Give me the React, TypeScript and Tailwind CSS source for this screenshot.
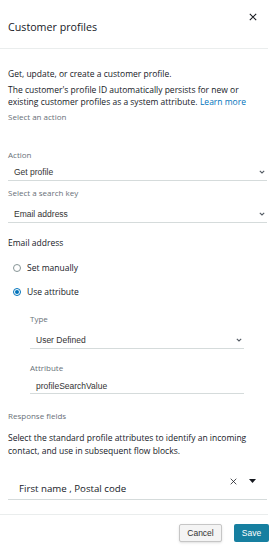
import React from 'react';

const Chevron: React.FC = () => (
  <svg width="6" height="4" viewBox="0 0 6 4" className="shrink-0">
    <path d="M0.8 0.8 L3 3 L5.2 0.8" fill="none" stroke="#545b64" strokeWidth="1.1" />
  </svg>
);

const Cross: React.FC<{ size: number; stroke?: number }> = ({ size, stroke = 1 }) => (
  <svg width={size} height={size} viewBox="0 0 10 10" className="shrink-0">
    <path d="M1 1 L9 9 M9 1 L1 9" fill="none" stroke="#16191f" strokeWidth={stroke} />
  </svg>
);

const Select: React.FC<{ value: string; className?: string }> = ({ value, className = '' }) => (
  <div className={`flex items-center justify-between h-[17px] border-b border-[#d5dbdb] pl-[6px] pr-[2px] ${className}`}>
    <span className="font-['Liberation_Sans',Arial,sans-serif] text-[8.5px] leading-[12px] text-[#333]">{value}</span>
    <Chevron />
  </div>
);

const Label: React.FC<{ children: React.ReactNode; className?: string }> = ({ children, className = '' }) => (
  <div className={`text-[8px] leading-[12px] text-[#687078] ${className}`}>{children}</div>
);

export default function App() {
  return (
    <div className="w-[280px] h-[555px] bg-white overflow-hidden font-['Open_Sans',sans-serif] text-[#16191f]">
      <div className="w-[268px]">
        <div className="flex justify-between h-[49px] border-b border-[#eaeded]">
          <div className="mt-[20px] ml-[8px] text-[10.7px] leading-[14px]">Customer profiles</div>
          <div className="mt-[13px] mr-[11px]">
            <Cross size={8} stroke={1.3} />
          </div>
        </div>

        <div className="pl-[8px] pr-[1px]">
          <div className="mt-[19px] text-[8.5px] leading-[12px]">Get, update, or create a customer profile.</div>
          <div className="mt-[4px] text-[8.5px] leading-[12px]">
            <div>The customer's profile ID automatically persists for new or</div>
            <div className="flex gap-[2.5px]">
              <span>existing customer profiles as a system attribute.</span>
              <span className="text-[#0073bb]">Learn more</span>
            </div>
          </div>
          <Label className="mt-[3px]">Select an action</Label>

          <Label className="mt-[26px]">Action</Label>
          <Select value="Get profile" className="mt-[3px]" />

          <Label className="mt-[6px]">Select a search key</Label>
          <Select value="Email address" className="mt-[7px]" />

          <div className="mt-[14px] text-[8.5px] leading-[12px]">Email address</div>

          <div className="mt-[13px] flex items-center gap-[6px] pl-[5px]">
            <span className="w-[8px] h-[8px] rounded-full border border-[#879596] bg-white" />
            <span className="text-[8.5px] leading-[12px]">Set manually</span>
          </div>
          <div className="mt-[12px] flex items-center gap-[6px] pl-[5px]">
            <span className="w-[8px] h-[8px] rounded-full border-[1.5px] border-[#0073bb] flex items-center justify-center">
              <span className="w-[3.5px] h-[3.5px] rounded-full bg-[#0073bb]" />
            </span>
            <span className="text-[8.5px] leading-[12px]">Use attribute</span>
          </div>

          <div className="ml-[22px] w-[214px]">
            <Label className="mt-[15px]">Type</Label>
            <Select value="User Defined" className="mt-[7px]" />
            <Label className="mt-[13px]">Attribute</Label>
            <div className="mt-[4px] h-[16px] border-b border-[#d5dbdb] pl-[6px] flex items-center">
              <span className="font-['Liberation_Sans',Arial,sans-serif] text-[8.5px] leading-[12px] text-[#333]">profileSearchValue</span>
            </div>
          </div>

          <Label className="mt-[16px]">Response fields</Label>
          <div className="mt-[9px] text-[8.5px] leading-[13px]">
            Select the standard profile attributes to identify an incoming contact, and use in subsequent flow blocks.
          </div>

          <div className="mt-[16px] h-[27px] border-b border-[#d5dbdb] flex justify-between">
            <span className="self-end pb-[4px] pl-[11px] text-[9.7px] leading-[12px]">First name , Postal code</span>
            <div className="flex items-center gap-[12px] h-[8px] mt-[4px] mr-[11px]">
              <Cross size={7} stroke={1.1} />
              <svg width="7" height="4" viewBox="0 0 7 4">
                <path d="M0 0 H7 L3.5 4 Z" fill="#16191f" />
              </svg>
            </div>
          </div>
        </div>

        <div className="mt-[14px] border-t border-[#eaeded]" />
      </div>

      <div className="flex justify-end gap-[12px] mt-[9px] pr-[11px] font-['Liberation_Sans',Arial,sans-serif] text-[8.5px]">
        <button className="w-[43px] h-[18px] rounded-[2px] border border-[#c6c6c6] bg-[#f4f4f4] text-[#333] shadow-sm">
          Cancel
        </button>
        <button className="w-[35px] h-[18px] rounded-[2px] bg-[#167fa0] text-white">Save</button>
      </div>
    </div>
  );
}
